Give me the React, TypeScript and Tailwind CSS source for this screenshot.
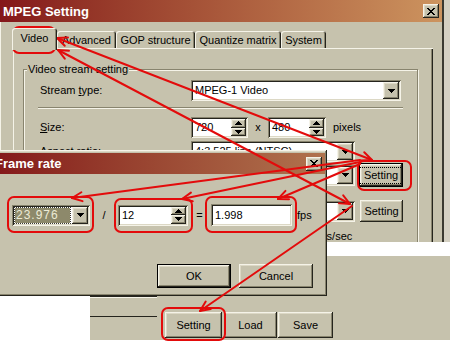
import React from "react";

const FACE = "bg-[#c6c2ad]";
const RAISED =
  "shadow-[inset_-1px_-1px_#25241d,inset_1px_1px_#f5f3e8,inset_-2px_-2px_#88846e,inset_2px_2px_#dcd8c5]";
const SUNKEN =
  "shadow-[inset_1px_1px_#88846e,inset_-1px_-1px_#f5f3e8,inset_2px_2px_#25241d,inset_-2px_-2px_#dcd8c5]";

function TriDown() {
  return (
    <svg width="7" height="4" viewBox="0 0 7 4" shapeRendering="crispEdges">
      <path d="M0 0h7v1H0zM1 1h5v1H1zM2 2h3v1H2zM3 3h1v1H3z" fill="#000" />
    </svg>
  );
}

function TriUp() {
  return (
    <svg width="7" height="4" viewBox="0 0 7 4" shapeRendering="crispEdges">
      <path d="M3 0h1v1H3zM2 1h3v1H2zM1 2h5v1H1zM0 3h7v1H0z" fill="#000" />
    </svg>
  );
}

function CloseBtn() {
  return (
    <div className={`w-[16px] h-[14px] mr-[3px] ${FACE} ${RAISED} flex items-center justify-center`}>
      <svg width="8" height="7" viewBox="0 0 8 7" shapeRendering="crispEdges">
        <path
          d="M0 0h2v1H0zM6 0h2v1H6zM1 1h2v1H1zM5 1h2v1H5zM2 2h4v1H2zM3 3h2v1H3zM2 4h4v1H2zM1 5h2v1H1zM5 5h2v1H5zM0 6h2v1H0zM6 6h2v1H6z"
          fill="#000"
        />
      </svg>
    </div>
  );
}

function Combo({ w, text, sel }: { w: string; text?: string; sel?: boolean }) {
  return (
    <div className={`${w} h-[21px] shrink-0 bg-white ${SUNKEN} p-[2px] flex`}>
      <div className="flex-1 min-w-0 flex">
        {sel ? (
          <div className="flex-1 m-[1px] mr-[2px] bg-[#8d896b] text-[#ecebd6] flex items-center pl-[1px] text-[12px] tracking-[1px] outline-1 outline-dotted outline-[#3a3930]">
            {text}
          </div>
        ) : (
          <div className="flex-1 flex items-center pl-[2px] whitespace-nowrap overflow-hidden">{text}</div>
        )}
      </div>
      <div className={`w-[16px] ${FACE} ${RAISED} flex items-center justify-center`}>
        <TriDown />
      </div>
    </div>
  );
}

function Spin({ w, text }: { w: string; text: string }) {
  return (
    <div className={`${w} h-[21px] shrink-0 bg-white ${SUNKEN} p-[2px] flex`}>
      <div className="flex-1 flex items-center pl-[2px]">{text}</div>
      <div className="w-[15px] flex flex-col">
        <div className={`flex-1 ${FACE} ${RAISED} flex items-center justify-center`}>
          <TriUp />
        </div>
        <div className={`flex-1 ${FACE} ${RAISED} flex items-center justify-center`}>
          <TriDown />
        </div>
      </div>
    </div>
  );
}

function Btn({
  label,
  w,
  h,
  strong,
  focus,
  cls = "",
}: {
  label: string;
  w: string;
  h: string;
  strong?: boolean;
  focus?: boolean;
  cls?: string;
}) {
  return (
    <div className={`${w} ${h} shrink-0 ${strong ? "border border-black" : ""} ${cls}`}>
      <div className={`w-full h-full ${FACE} ${RAISED} flex items-center justify-center`}>
        {focus ? (
          <span className="outline-1 outline-dotted outline-black outline-offset-[1px] px-[3px] leading-[13px]">
            {label}
          </span>
        ) : (
          label
        )}
      </div>
    </div>
  );
}

function Tab({ label, w, sel }: { label: string; w: string; sel?: boolean }) {
  return (
    <div
      className={`${w} ${
        sel ? "h-[22px] -mb-[2px] relative z-10 pb-[2px]" : "h-[17px] pt-[1px]"
      } ${FACE} rounded-t-[3px] shadow-[inset_1px_1px_#f5f3e8,inset_-1px_0_#25241d,inset_-2px_0_#88846e] flex items-center justify-center`}
    >
      {label}
    </div>
  );
}

function Row({ label, children, cls }: { label?: React.ReactNode; children?: React.ReactNode; cls: string }) {
  return (
    <div className={`flex items-center ${cls}`}>
      <div className="w-[151px] shrink-0 whitespace-nowrap">{label}</div>
      {children}
    </div>
  );
}

function MainWindow() {
  return (
    <div className={`flex h-[242px] shrink-0 ${FACE} overflow-hidden`}>
      <div className="w-[442px] flex flex-col shadow-[inset_1px_0_#f5f3e8]">
        <div className="h-[22px] shrink-0 flex items-center bg-linear-to-r from-[#84161a] to-[#cc945f]">
          <span className="pl-[3px] text-[13px] font-bold text-white">MPEG Setting</span>
          <div className="flex-1" />
          <CloseBtn />
        </div>

        <div className="h-[26px] shrink-0 flex items-end pl-[12px]">
          <Tab label="Video" w="w-[45px]" sel />
          <Tab label="Advanced" w="w-[59px]" />
          <Tab label="GOP structure" w="w-[79px]" />
          <Tab label="Quantize matrix" w="w-[86px]" />
          <Tab label="System" w="w-[45px]" />
        </div>

        <div className="ml-[13px] w-[420px] flex-1 min-h-0 pt-[21px] pl-[10px] shadow-[inset_1px_1px_#f5f3e8,inset_-1px_0_#25241d,inset_-2px_0_#88846e]">
          <div className="relative w-[395px] h-[260px] border border-[#88846e] shadow-[inset_1px_1px_#f5f3e8,1px_1px_#f5f3e8] pl-[16px] flex flex-col">
            <span className={`absolute left-[3px] -top-[7px] px-[1px] leading-[13px] ${FACE}`}>
              Video stream setting
            </span>

            <Row label={<span>Stream <u>t</u>ype:</span>} cls="mt-[10px] h-[21px]">
              <Combo w="w-[210px]" text="MPEG-1 Video" />
            </Row>

            <div className="mt-[6px] -ml-[2px] w-[365px] h-[2px] border-t border-[#88846e] border-b border-b-[#f5f3e8]" />

            <Row label={<span><u>S</u>ize:</span>} cls="mt-[8px] h-[21px]">
              <Spin w="w-[57px]" text="720" />
              <div className="w-[20px] text-center">x</div>
              <Spin w="w-[58px]" text="480" />
              <span className="ml-[7px]">pixels</span>
            </Row>

            <Row label="Aspect ratio:" cls="mt-[3px] h-[21px]">
              <Combo w="w-[164px]" text="4:3 525 line (NTSC)" />
            </Row>

            <Row cls="mt-[1px] h-[24px]">
              <Combo w="w-[164px]" />
              <Btn label="Setting" w="w-[44px]" h="h-[24px]" strong focus cls="ml-[4px]" />
            </Row>

            <Row cls="mt-[13px] h-[22px]">
              <Combo w="w-[164px]" />
              <Btn label="Setting" w="w-[43px]" h="h-[22px]" cls="ml-[5px]" />
            </Row>

            <Row cls="mt-[7px] h-[14px]">
              <span className="ml-[124px]">bits/sec</span>
            </Row>
          </div>
        </div>
      </div>
      <div className="w-[2px] bg-[#3a3930]" />
      <div className="flex-1 bg-[#d4d0c2]" />
    </div>
  );
}

function BottomPart() {
  return (
    <div className={`h-[98px] shrink-0 ${FACE} flex flex-col`}>
      <div className="flex h-[14px]">
        <div className="w-[327px]" />
        <div className="flex-1 bg-white" />
      </div>
      <div className="flex items-start">
        <div className="ml-[90px] mt-[40px] w-[67px] h-[21px] border-y border-[#25241d] shadow-[inset_0_1px_#f5f3e8]" />
        <div className="ml-[8px] mt-[56px] flex">
          <Btn label="Setting" w="w-[57px]" h="h-[26px]" />
          <Btn label="Load" w="w-[53px]" h="h-[26px]" cls="ml-[2px]" />
          <Btn label="Save" w="w-[55px]" h="h-[26px]" cls="ml-[1px]" />
        </div>
      </div>
    </div>
  );
}

function FrameRateDialog() {
  return (
    <div className={`absolute left-[-8px] top-[150px] w-[335px] h-[146px] ${FACE} ${RAISED} p-[2px] flex flex-col`}>
      <div className="h-[21px] mt-[1px] shrink-0 flex items-center bg-linear-to-r from-[#84161a] to-[#b0734e]">
        <span className="pl-[1px] text-[13px] font-bold text-white">Frame rate</span>
        <div className="flex-1" />
        <CloseBtn />
      </div>

      <div className="mt-[30px] pl-[18px] flex items-center">
        <Combo w="w-[78px]" text="23.976" sel />
        <div className="w-[28px] text-center">/</div>
        <Spin w="w-[70px]" text="12" />
        <div className="w-[23px] text-center">=</div>
        <div className={`w-[81px] h-[22px] bg-white ${SUNKEN} flex items-center pl-[4px]`}>1.998</div>
        <span className="ml-[5px]">fps</span>
      </div>

      <div className="mt-[38px] pr-[12px] flex justify-end gap-[8px]">
        <Btn label="OK" w="w-[74px]" h="h-[24px]" strong />
        <Btn label="Cancel" w="w-[74px]" h="h-[24px]" />
      </div>
    </div>
  );
}

type Line = { x1: number; y1: number; x2: number; y2: number; h1?: boolean; h2?: boolean };

const LINES: Line[] = [
  { x1: 57, y1: 38, x2: 372, y2: 160, h1: true, h2: true },
  { x1: 58, y1: 50, x2: 350, y2: 204, h1: true, h2: true },
  { x1: 200, y1: 311, x2: 352, y2: 206, h1: true },
  { x1: 72, y1: 198, x2: 360, y2: 160, h1: true },
  { x1: 182, y1: 199, x2: 360, y2: 162, h1: true },
  { x1: 278, y1: 199, x2: 360, y2: 164, h1: true },
];

const BOXES = [
  { x: 13, y: 27, w: 42, h: 26 },
  { x: 358, y: 161, w: 53, h: 29 },
  { x: 8, y: 197, w: 85, h: 35 },
  { x: 115, y: 199, w: 77, h: 33 },
  { x: 206, y: 197, w: 90, h: 35 },
  { x: 162, y: 308, w: 63, h: 32 },
];

function head(px: number, py: number, qx: number, qy: number) {
  const a = Math.atan2(qy - py, qx - px);
  const l = 11;
  const s = 0.42;
  return `M${px + l * Math.cos(a + s)},${py + l * Math.sin(a + s)} L${px},${py} L${
    px + l * Math.cos(a - s)
  },${py + l * Math.sin(a - s)}`;
}

function Marks() {
  return (
    <svg className="absolute left-0 top-0 pointer-events-none" width="450" height="349" viewBox="0 0 450 349">
      <g stroke="#e30b0b" strokeWidth="2" fill="none" strokeLinecap="round" strokeLinejoin="round">
        {BOXES.map((b, i) => (
          <rect key={i} x={b.x} y={b.y} width={b.w} height={b.h} rx="6" />
        ))}
        {LINES.map((l, i) => (
          <g key={i}>
            <line x1={l.x1} y1={l.y1} x2={l.x2} y2={l.y2} />
            {l.h1 && <path d={head(l.x1, l.y1, l.x2, l.y2)} />}
            {l.h2 && <path d={head(l.x2, l.y2, l.x1, l.y1)} />}
          </g>
        ))}
      </g>
    </svg>
  );
}

export default function App() {
  return (
    <div className="relative w-[450px] h-[349px] overflow-hidden bg-white font-['Liberation_Sans',Arial,sans-serif] text-[11px] leading-none text-black flex flex-col">
      <MainWindow />
      <BottomPart />
      <FrameRateDialog />
      <div className="absolute left-0 top-[296px] w-[90px] h-[53px] bg-white" />
      <Marks />
    </div>
  );
}
